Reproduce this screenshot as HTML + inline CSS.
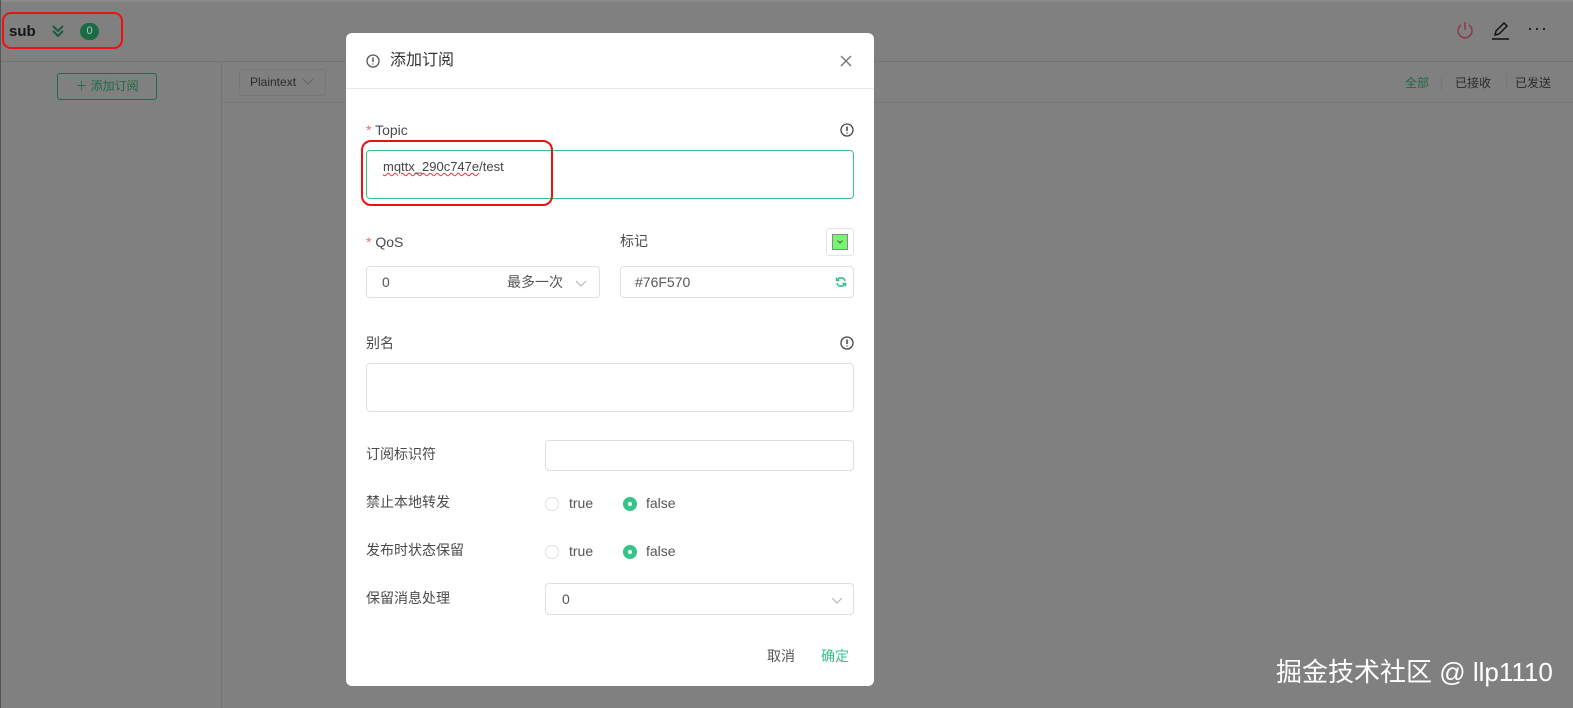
<!DOCTYPE html>
<html><head><meta charset="utf-8"><style>
*{box-sizing:border-box;margin:0;padding:0}
body{width:1573px;height:708px;overflow:hidden;background:#808080;font-family:"Liberation Sans","Noto Sans CJK SC",sans-serif;position:relative;color:#333}
.a{position:absolute}
.lbl{font-size:14px;color:#4a4a4a;line-height:16px}
.inp{position:absolute;border:1px solid #dcdfe6;border-radius:4px;background:#fff}
.radio{position:absolute;width:14px;height:14px;border-radius:50%;border:1px solid #dcdfe6;background:#fff}
.radio.on{border:none;background:#34c388}
.radio.on:after{content:"";position:absolute;left:5px;top:5px;width:4px;height:4px;border-radius:50%;background:#fff}
.rt{position:absolute;font-size:14px;color:#555;line-height:16px}
.chev{position:absolute}
</style></head><body>
<div class="a" style="left:0;top:0;width:1573px;height:2px;background:#8a8a8a"></div>
<div class="a" style="left:0;top:61px;width:1573px;height:1px;background:#737373"></div>
<div class="a" style="left:221px;top:62px;width:1px;height:646px;background:#737373"></div>
<div class="a" style="left:222px;top:102px;width:1351px;height:1px;background:#777"></div>
<div class="a" style="left:0;top:0;width:1px;height:708px;background:#555"></div>
<div class="a" style="left:9px;top:23px;font-size:15px;font-weight:bold;color:#151515">sub</div>
<svg class="a" style="left:50px;top:23px" width="16" height="16" viewBox="0 0 16 16"><path d="M3 3l5 5 5-5M3 8l5 5 5-5" fill="none" stroke="#1c5b3e" stroke-width="2"/></svg>
<div class="a" style="left:80px;top:23px;width:19px;height:17px;border-radius:9px;background:#1d6a45;color:#9cc;font-size:11px;text-align:center;line-height:17px">0</div>
<div class="a" style="left:2px;top:12px;width:121px;height:37px;border:2px solid #e11;border-radius:9px"></div>
<div class="a" style="left:57px;top:73px;width:100px;height:27px;border:1px solid #1e6a47;border-radius:3px;color:#1e6a47;font-size:12px;text-align:center;line-height:24px">＋ 添加订阅</div>
<div class="a" style="left:239px;top:69px;width:87px;height:27px;border:1px solid #777;border-radius:3px;color:#2a2a2a;font-size:12px;line-height:25px;padding-left:10px">Plaintext</div>
<svg class="chev" style="left:302px;top:78px" width="12" height="8" viewBox="0 0 12 8"><path d="M1 1l5 5 5-5" fill="none" stroke="#666" stroke-width="1.2"/></svg>
<svg class="a" style="left:1455px;top:20px" width="20" height="20" viewBox="0 0 20 20"><path d="M6 5a7 7 0 1 0 8 0M10 2v8" fill="none" stroke="#8a3a45" stroke-width="1.5"/></svg>
<svg class="a" style="left:1490px;top:20px" width="22" height="20" viewBox="0 0 22 20"><path d="M5 15l1-4 8-8 3 3-8 8zM2 19h17" fill="none" stroke="#111" stroke-width="1.5"/></svg>
<div class="a" style="left:1527px;top:18px;font-size:18px;color:#111;letter-spacing:1px">···</div>
<div class="a" style="left:1405px;top:74px;font-size:12px;color:#1c6a45">全部</div>
<div class="a" style="left:1441px;top:75px;width:1px;height:16px;background:#777"></div>
<div class="a" style="left:1455px;top:74px;font-size:12px;color:#2a2a2a">已接收</div>
<div class="a" style="left:1506px;top:75px;width:1px;height:16px;background:#777"></div>
<div class="a" style="left:1515px;top:74px;font-size:12px;color:#2a2a2a">已发送</div>
<div class="a" style="left:1276px;top:652px;font-size:26px;color:#fff">掘金技术社区 @ llp1110</div>

<div class="a" style="left:346px;top:33px;width:528px;height:653px;background:#fff;border-radius:6px">
<div class="a" style="left:0;top:55px;width:528px;height:1px;background:#e8e8e8"></div>
<svg class="a" style="left:20px;top:21px" width="14" height="14" viewBox="0 0 14 14"><circle cx="7" cy="7" r="6" fill="none" stroke="#555" stroke-width="1.3"/><path d="M7 3.5v4.5M7 9.5v1" stroke="#555" stroke-width="1.5"/></svg>
<div class="a" style="left:44px;top:18px;font-size:16px;color:#333;line-height:20px">添加订阅</div>
<svg class="a" style="left:494px;top:22px" width="12" height="12" viewBox="0 0 12 12"><path d="M1 1l10 10M11 1L1 11" stroke="#777" stroke-width="1.4"/></svg>

<div class="a lbl" style="left:20px;top:89px"><span style="color:#f56c6c">* </span>Topic</div>
<svg class="a" style="left:494px;top:90px" width="14" height="14" viewBox="0 0 14 14"><circle cx="7" cy="7" r="6" fill="none" stroke="#444" stroke-width="1.3"/><path d="M7 3.5v4.5M7 9.5v1" stroke="#444" stroke-width="1.5"/></svg>
<div class="inp" style="left:20px;top:117px;width:488px;height:49px;border-color:#34c388;padding:8px 16px;font-size:13px;color:#444"><span style="text-decoration:underline wavy #e33;text-decoration-thickness:1px">mqttx_290c747e</span>/test</div>
<div class="a" style="left:15px;top:107px;width:192px;height:66px;border:2px solid #e11;border-radius:10px"></div>

<div class="a lbl" style="left:20px;top:201px"><span style="color:#f56c6c">* </span>QoS</div>
<div class="a lbl" style="left:274px;top:200px">标记</div>
<div class="a" style="left:480px;top:195px;width:28px;height:28px;border:1px solid #e4e4e4;border-radius:3px"><div style="position:relative;margin:5px;width:16px;height:16px;background:#76f570;border:1px solid #888"><svg style="position:absolute;left:4px;top:5px" width="6" height="4" viewBox="0 0 6 4"><path d="M.5.5l2.5 2.5 2.5-2.5" fill="none" stroke="#333" stroke-width=".8"/></svg></div></div>
<div class="inp" style="left:20px;top:233px;width:234px;height:32px;font-size:14px;color:#555;padding:7px 15px;line-height:16px">0<span style="position:absolute;right:36px;top:7px">最多一次</span><svg class="chev" style="right:12px;top:13px" width="12" height="7" viewBox="0 0 12 7"><path d="M1 1l5 5 5-5" fill="none" stroke="#bbb" stroke-width="1.2"/></svg></div>
<div class="inp" style="left:274px;top:233px;width:234px;height:32px;font-size:14px;color:#555;padding:7px 14px;line-height:16px">#76F570<svg class="chev" style="right:6px;top:9px" width="12" height="12" viewBox="0 0 12 12"><path d="M10 5A4 4 0 0 0 2.5 4M2 7a4 4 0 0 0 7.5 1" fill="none" stroke="#34c388" stroke-width="1.6"/><path d="M1.5 1.5v3h3M10.5 10.5v-3h-3" fill="none" stroke="#34c388" stroke-width="1.4"/></svg></div>

<div class="a lbl" style="left:20px;top:302px">别名</div>
<svg class="a" style="left:494px;top:303px" width="14" height="14" viewBox="0 0 14 14"><circle cx="7" cy="7" r="6" fill="none" stroke="#444" stroke-width="1.3"/><path d="M7 3.5v4.5M7 9.5v1" stroke="#444" stroke-width="1.5"/></svg>
<div class="inp" style="left:20px;top:330px;width:488px;height:49px"></div>

<div class="a lbl" style="left:20px;top:413px">订阅标识符</div>
<div class="inp" style="left:199px;top:407px;width:309px;height:31px"></div>
<div class="a lbl" style="left:20px;top:461px">禁止本地转发</div>
<div class="radio" style="left:199px;top:464px"></div><div class="rt" style="left:223px;top:462px">true</div>
<div class="radio on" style="left:277px;top:464px"></div><div class="rt" style="left:300px;top:462px">false</div>
<div class="a lbl" style="left:20px;top:509px">发布时状态保留</div>
<div class="radio" style="left:199px;top:512px"></div><div class="rt" style="left:223px;top:510px">true</div>
<div class="radio on" style="left:277px;top:512px"></div><div class="rt" style="left:300px;top:510px">false</div>
<div class="a lbl" style="left:20px;top:557px">保留消息处理</div>
<div class="inp" style="left:199px;top:550px;width:309px;height:32px;font-size:14px;color:#555;padding:7px 16px;line-height:16px">0<svg class="chev" style="right:10px;top:13px" width="12" height="7" viewBox="0 0 12 7"><path d="M1 1l5 5 5-5" fill="none" stroke="#bbb" stroke-width="1.2"/></svg></div>
<div class="a" style="left:421px;top:615px;font-size:14px;color:#555;line-height:16px">取消</div>
<div class="a" style="left:475px;top:615px;font-size:14px;color:#34c388;line-height:16px">确定</div>
</div>
</body></html>
